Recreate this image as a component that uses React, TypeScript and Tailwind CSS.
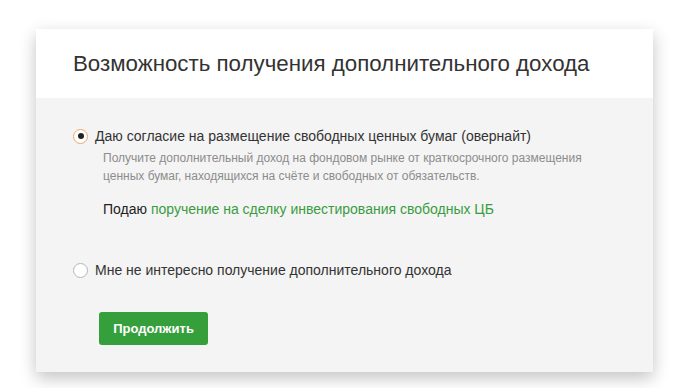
export default function App() {
  return (
    <div className="min-h-[388px] w-[700px] bg-white pt-[29px] font-['Liberation_Sans',Arial,sans-serif]">
      <div className="ml-[36px] w-[617px] shadow-[0_6px_16px_rgba(0,0,0,0.24)]">
        {/* Header */}
        <div className="flex h-[69px] items-center bg-white px-[37px]">
          <h1 className="text-[22.3px] font-normal text-[#333]">Возможность получения дополнительного дохода</h1>
        </div>

        {/* Body */}
        <div className="bg-[#f4f4f4] px-[37px] pt-[29px] pb-[27px]">
          <label className="flex items-center gap-[7px] text-[14px] leading-[18px] text-[#333]">
            <span className="flex h-[15px] w-[15px] items-center justify-center rounded-full border border-[#f0a868] bg-white">
              <span className="h-[6px] w-[6px] rounded-full bg-[#222]" />
            </span>
            Даю согласие на размещение свободных ценных бумаг (овернайт)
          </label>
          <div className="pl-[30px]">
            <p className="mt-[4px] text-[12px] leading-[18px] text-[#8c8c8c]">
              Получите дополнительный доход на фондовом рынке от краткосрочного размещения
              <br />
              ценных бумаг, находящихся на счёте и свободных от обязательств.
            </p>
            <p className="mt-[15px] text-[14px] leading-[18px] text-[#222]">
              Подаю <a className="text-[#3a9c3f]">поручение на сделку инвестирования свободных ЦБ</a>
            </p>
          </div>

          <label className="mt-[43px] flex items-center gap-[7px] text-[14px] leading-[18px] text-[#333]">
            <span className="h-[15px] w-[15px] rounded-full border border-[#b5b5b5] bg-white" />
            Мне не интересно получение дополнительного дохода
          </label>

          <button className="mt-[33px] ml-[26px] h-[33px] w-[109px] rounded-[3px] bg-[#35a03b] text-[13px] font-bold text-white">
            Продолжить
          </button>
        </div>
      </div>
    </div>
  )
}
